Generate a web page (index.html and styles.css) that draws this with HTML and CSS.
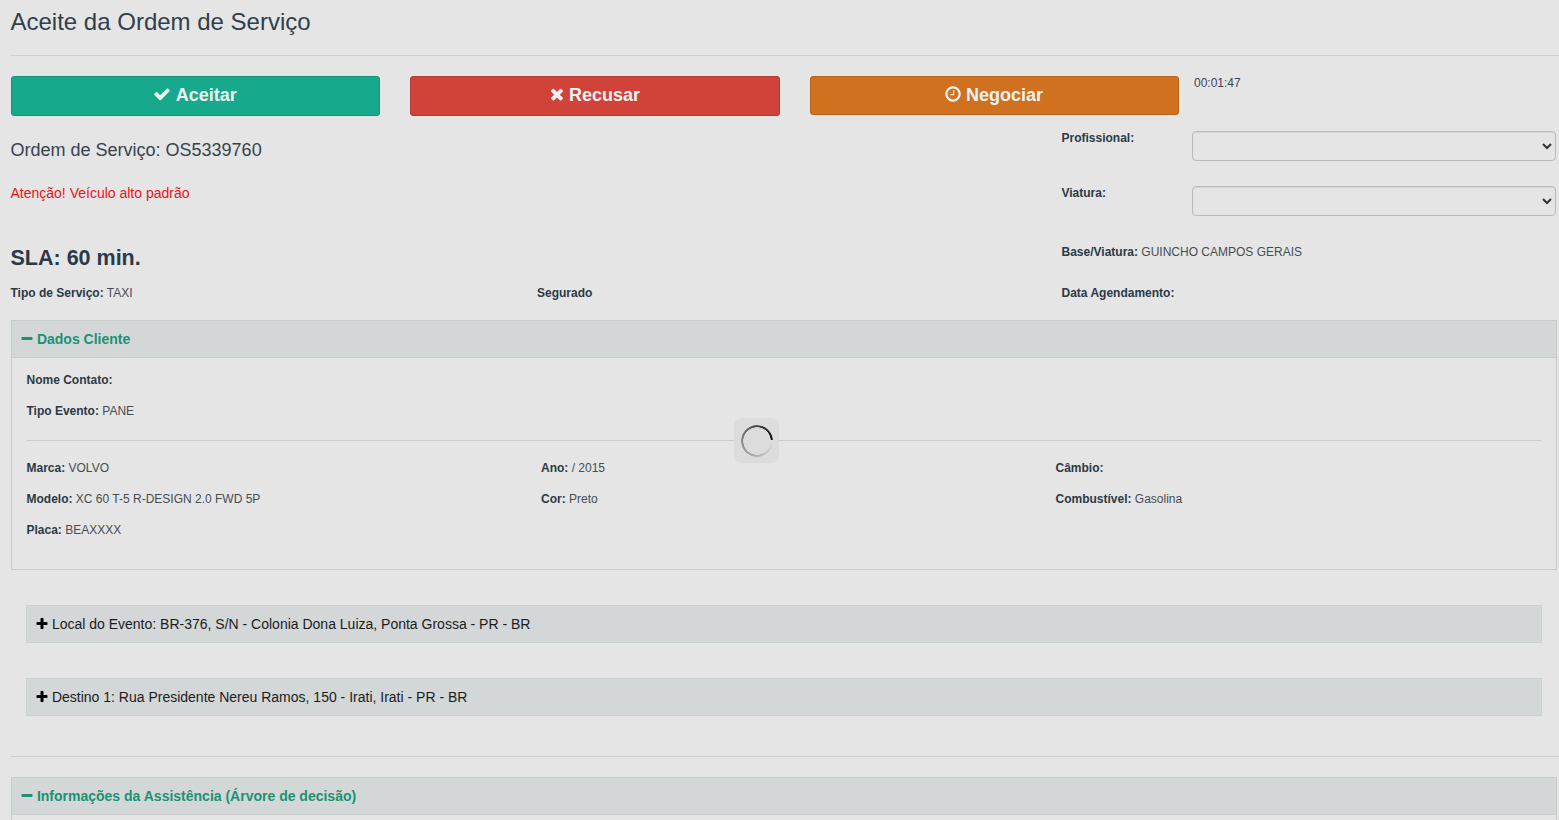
FILE: index.html
```html
<!DOCTYPE html>
<html lang="pt-BR">
<head>
<meta charset="utf-8">
<title>Aceite da Ordem de Serviço</title>
<link rel="stylesheet" href="styles.css">
</head>
<body>
<svg class="defs" aria-hidden="true">
  <symbol id="i-check" viewBox="0 0 1792 1792"><path d="M1671 566q0 40-28 68l-724 724-136 136q-28 28-68 28t-68-28l-136-136-362-362q-28-28-28-68t28-68l136-136q28-28 68-28t68 28l294 295 656-657q28-28 68-28t68 28l136 136q28 28 28 68z"/></symbol>
  <symbol id="i-times" viewBox="0 0 1792 1792"><path d="M1490 1322q0 40-28 68l-136 136q-28 28-68 28t-68-28l-294-294-294 294q-28 28-68 28t-68-28l-136-136q-28-28-28-68t28-68l294-294-294-294q-28-28-28-68t28-68l136-136q28-28 68-28t68 28l294 294 294-294q28-28 68-28t68 28l136 136q28 28 28 68t-28 68l-294 294 294 294q28 28 28 68z"/></symbol>
  <symbol id="i-clock" viewBox="0 0 1792 1792"><path d="M1024 544v448q0 14-9 23t-23 9h-320q-14 0-23-9t-9-23v-64q0-14 9-23t23-9h224v-352q0-14 9-23t23-9h64q14 0 23 9t9 23zm416 352q0-148-73-273t-198-198-273-73-273 73-198 198-73 273 73 273 198 198 273 73 273-73 198-198 73-273zm224 0q0 209-103 385.500t-279.500 279.500-385.500 103-385.500-103-279.500-279.500-103-385.500 103-385.500 279.500-279.500 385.500-103 385.500 103 279.500 279.500 103 385.500z"/></symbol>
  <symbol id="i-plus" viewBox="0 0 1792 1792"><path d="M1600 736v192q0 40-28 68t-68 28h-416v416q0 40-28 68t-68 28h-192q-40 0-68-28t-28-68v-416h-416q-40 0-68-28t-28-68v-192q0-40 28-68t68-28h416v-416q0-40 28-68t68-28h192q40 0 68 28t28 68v416h416q40 0 68 28t28 68z"/></symbol>
  <symbol id="i-minus" viewBox="0 0 1792 1792"><path d="M1600 736v192q0 40-28 68t-68 28h-1216q-40 0-68-28t-28-68v-192q0-40 28-68t68-28h1216q40 0 68 28t28 68z"/></symbol>
</svg>

<h1 class="title">Aceite da Ordem de Serviço</h1>
<hr class="rule rule-top">

<div class="actions">
  <button class="btn btn-accept" type="button"><svg class="btn-icon"><use href="#i-check"/></svg> Aceitar</button>
  <button class="btn btn-refuse" type="button"><svg class="btn-icon icon-times"><use href="#i-times"/></svg> Recusar</button>
  <button class="btn btn-negotiate" type="button"><svg class="btn-icon icon-clock"><use href="#i-clock"/></svg> Negociar</button>
  <span class="timer">00:01:47</span>
</div>

<div class="summary">
  <div class="summary-left">
    <div class="os-number">Ordem de Serviço: OS5339760</div>
    <div class="alert">Atenção! Veículo alto padrão</div>
    <div class="sla">SLA: 60 min.</div>
  </div>
  <div class="summary-right">
    <div class="field">
      <label class="label field-label" for="prof">Profissional:</label>
      <select id="prof" class="select"><option></option></select>
    </div>
    <div class="field">
      <label class="label field-label" for="viat">Viatura:</label>
      <select id="viat" class="select"><option></option></select>
    </div>
    <div class="info base"><b class="label">Base/Viatura:</b> GUINCHO CAMPOS GERAIS</div>
  </div>
</div>

<div class="service-row">
  <div class="info"><b class="label">Tipo de Serviço:</b> TAXI</div>
  <div class="info"><b class="label">Segurado</b></div>
  <div class="info"><b class="label">Data Agendamento:</b></div>
</div>

<section class="panel">
  <header class="panel-head"><svg class="head-icon"><use href="#i-minus"/></svg> Dados Cliente</header>
  <div class="panel-body">
    <div class="info line"><b class="label">Nome Contato:</b></div>
    <div class="info line"><b class="label">Tipo Evento:</b> PANE</div>
    <hr class="rule rule-inner">
    <div class="vehicle">
      <div class="info line"><b class="label">Marca:</b> VOLVO</div>
      <div class="info line"><b class="label">Ano:</b> / 2015</div>
      <div class="info line"><b class="label">Câmbio:</b></div>
      <div class="info line"><b class="label">Modelo:</b> XC 60 T-5 R-DESIGN 2.0 FWD 5P</div>
      <div class="info line"><b class="label">Cor:</b> Preto</div>
      <div class="info line"><b class="label">Combustível:</b> Gasolina</div>
      <div class="info line"><b class="label">Placa:</b> BEAXXXX</div>
    </div>
  </div>
</section>

<div class="address"><svg class="addr-icon"><use href="#i-plus"/></svg> Local do Evento: BR-376, S/N - Colonia Dona Luiza, Ponta Grossa - PR - BR</div>
<div class="address"><svg class="addr-icon"><use href="#i-plus"/></svg> Destino 1: Rua Presidente Nereu Ramos, 150 - Irati, Irati - PR - BR</div>

<hr class="rule rule-bottom">

<section class="panel panel-last">
  <header class="panel-head"><svg class="head-icon"><use href="#i-minus"/></svg> Informações da Assistência (Árvore de decisão)</header>
</section>

<div class="spinner"><div class="spinner-ring"></div></div>
</body>
</html>
```
FILE: styles.css
```css
* { box-sizing: border-box; }
html, body { margin: 0; height: 820px; overflow: hidden; }
body {
  background: #e5e5e5;
  color: #2a3a46;
  font-family: "Liberation Sans", Arial, sans-serif;
  font-size: 12px;
}
.defs { display: none; }

.title {
  margin: 0;
  padding: 9px 0 0 10.5px;
  height: 55px;
  font-size: 24px;
  line-height: 26px;
  font-weight: 400;
  color: #2f3f4c;
}
.rule { border: 0; border-top: 1px solid #cfcfcf; margin: 0; }
.rule-top { margin-left: 11px; }
.rule-inner { margin: 5px 0 20px 0.5px; border-top-color: #c9cbcb; }
.rule-bottom { margin: 40px 0 20px 11px; }

.actions {
  display: flex;
  align-items: flex-start;
  padding: 20px 0 0 11px;
}
.btn {
  height: 40px;
  width: 369px;
  margin-right: 30px;
  padding: 0 1px 4px 0;
  border: 1px solid;
  border-radius: 3px;
  font: bold 18px/1 "Liberation Sans", Arial, sans-serif;
  color: #ecf3f1;
}
.btn-icon { width: 18px; height: 18px; fill: currentColor; vertical-align: -2px; }
.icon-times { margin-right: -2px; }
.icon-clock { margin-right: -1px; }
.btn-accept { background: #17a98c; border-color: #14957b; }
.btn-refuse { width: 370px; padding-right: 2px; background: #d14338; border-color: #b23a30; }
.btn-negotiate { background: #cf711f; border-color: #b8621a; height: 39px; margin-right: 15px; padding: 0 2px 2px 0; }
.timer { font-size: 12px; line-height: 14px; color: #3b4650; }

.summary { display: flex; padding-left: 10.5px; }
.summary-left { width: 1051px; }
.os-number { padding-top: 23px; font-size: 18px; line-height: 22px; color: #35434f; }
.alert { padding-top: 24px; font-size: 14px; line-height: 16px; color: #e8141c; }
.sla { padding-top: 44px; font-size: 21.5px; line-height: 26px; font-weight: 700; color: #2a3a46; }

.summary-right { flex: 1; padding-top: 15px; }
.field { display: flex; height: 30px; margin-bottom: 25px; }
.field-label { display: block; width: 130.5px; line-height: 14px; }
.select {
  width: 364px;
  height: 30px;
  border: 1px solid #b9bbbb;
  border-radius: 4px;
  background: #e5e5e5;
  box-shadow: inset 0 1px 1px rgba(0, 0, 0, 0.075);
  color: #333;
  font: 12px "Liberation Sans", Arial, sans-serif;
}
.label { font-weight: 700; color: #2a3a46; }
.info { font-size: 12px; line-height: 14px; color: #454d54; }
.base { margin-top: 29px; }

.service-row {
  display: grid;
  grid-template-columns: 526.5px 524.5px 1fr;
  padding: 15px 0 0 10.5px;
  height: 30px;
}

.panel { margin: 19px 2px 0 11px; border: 1px solid #c8cccc; height: 250px; }
.panel-head {
  height: 37px;
  padding: 10px 8px 0;
  background: #d3d7d8;
  border-bottom: 1px solid #c8cccc;
  font-size: 14px;
  line-height: 17px;
  font-weight: 700;
  color: #1a9273;
}
.head-icon { width: 14px; height: 14px; margin-right: -1px; fill: currentColor; vertical-align: -2px; }
.panel-body { padding: 15px 15px 0 14.5px; }
.line { height: 31px; }
.vehicle { display: grid; grid-template-columns: 514.5px 514.5px 1fr; }

.address {
  height: 38px;
  margin: 35px 17px 0 26px;
  padding: 10px 8px 0;
  background: #d3d7d8;
  border: 1px solid #cdd0d1;
  font-size: 14px;
  line-height: 16px;
  color: #1c1c1c;
}
.addr-icon { width: 14px; height: 14px; margin-right: -1px; fill: #000; vertical-align: -2px; }

.panel-last { margin-top: 0; }

.spinner {
  position: absolute;
  left: 734px;
  top: 418px;
  width: 45px;
  height: 45px;
  padding: 7px;
  border-radius: 8px;
  background: #dcdcdc;
}
.spinner-ring {
  width: 32px;
  height: 32px;
  border-radius: 50%;
  background: conic-gradient(from 95deg, rgba(60,60,60,0) 0deg, #8a8a8a 170deg, #4a4a4a 260deg, #111 350deg, rgba(0,0,0,0) 350deg);
  -webkit-mask: radial-gradient(farthest-side, transparent calc(100% - 2.5px), #000 calc(100% - 2px));
  mask: radial-gradient(farthest-side, transparent calc(100% - 2.5px), #000 calc(100% - 2px));
}
```
